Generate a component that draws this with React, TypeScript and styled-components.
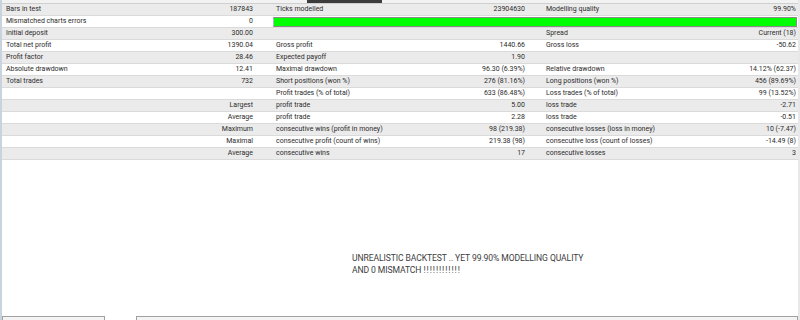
import styled, { createGlobalStyle } from "styled-components";

const GlobalStyle = createGlobalStyle`
  html, body {
    margin: 0;
    padding: 0;
    background: #ffffff;
  }
  body {
    font-family: Roboto, "Liberation Sans", sans-serif;
    color: #2b2b2b;
  }
`;

const Window = styled.div`
  width: 800px;
  height: 320px;
  box-sizing: border-box;
  display: flex;
  flex-direction: column;
  overflow: hidden;
  background: #ffffff;
  border-left: 2px solid #c9d3de;
  border-right: 2px solid #e8e8e8;
`;

const TopStrip = styled.div`
  height: 3px;
  flex-shrink: 0;
  background: #f2f2f2;
  border-bottom: 1px solid #cfcfcf;
  display: flex;
  padding-left: 305px;
`;

const ScrollThumb = styled.div`
  width: 75px;
  height: 3px;
  background: #3c3c3c;
`;

const Table = styled.div`
  display: flex;
  flex-direction: column;
  flex-shrink: 0;
`;

const Row = styled.div<{ $shade: boolean }>`
  display: grid;
  grid-template-columns: 148px 123px 167px 103px 157px 98px;
  height: 12px;
  box-sizing: border-box;
  border-bottom: 1px solid #dadada;
  background: ${(p) => (p.$shade ? "#ebebeb" : "#ffffff")};
  font-size: 7px;
  line-height: 11px;
`;

const Label = styled.div<{ $pad: number }>`
  padding-left: ${(p) => p.$pad}px;
  white-space: nowrap;
  overflow: hidden;
`;

const Value = styled.div<{ $pad: number }>`
  padding-right: ${(p) => p.$pad}px;
  text-align: right;
  white-space: nowrap;
  overflow: hidden;
`;

const QualityBar = styled.div`
  grid-column: 3 / 7;
  margin: 1px 1px 0 0;
  height: 10px;
  box-sizing: border-box;
  background: #00ff00;
  border: 1px solid #8a8a8a;
  border-left-color: #a9b8c8;
`;

const NoteArea = styled.div`
  flex: 1;
  padding: 92px 0 0 350px;
`;

const Note = styled.p`
  margin: 0;
  width: 260px;
  font-size: 8.6px;
  line-height: 12px;
  color: #404040;
  letter-spacing: -0.1px;
`;

const Bangs = styled.span`
  letter-spacing: 0.9px;
`;

const BottomBar = styled.div`
  height: 4px;
  flex-shrink: 0;
  display: flex;
  gap: 31px;
`;

const Field = styled.div<{ $w: number }>`
  width: ${(p) => p.$w}px;
  box-sizing: border-box;
  border-top: 1px solid #a0a0a0;
  border-left: 1px solid #a0a0a0;
  border-right: 1px solid #a0a0a0;
  background: #f4f4f4;
  flex: ${(p) => (p.$w ? "none" : "1")};
`;

type Cells = [string, string, string, string, string, string];

const rows: (Cells | "bar")[] = [
  ["Bars in test", "187843", "Ticks modelled", "23904630", "Modelling quality", "99.90%"],
  "bar",
  ["Initial deposit", "300.00", "", "", "Spread", "Current (18)"],
  ["Total net profit", "1390.04", "Gross profit", "1440.66", "Gross loss", "-50.62"],
  ["Profit factor", "28.46", "Expected payoff", "1.90", "", ""],
  ["Absolute drawdown", "12.41", "Maximal drawdown", "96.30 (6.39%)", "Relative drawdown", "14.12% (62.37)"],
  ["Total trades", "732", "Short positions (won %)", "276 (81.16%)", "Long positions (won %)", "456 (89.69%)"],
  ["", "", "Profit trades (% of total)", "633 (86.48%)", "Loss trades (% of total)", "99 (13.52%)"],
  ["", "Largest", "profit trade", "5.00", "loss trade", "-2.71"],
  ["", "Average", "profit trade", "2.28", "loss trade", "-0.51"],
  ["", "Maximum", "consecutive wins (profit in money)", "98 (219.38)", "consecutive losses (loss in money)", "10 (-7.47)"],
  ["", "Maximal", "consecutive profit (count of wins)", "219.38 (98)", "consecutive loss (count of losses)", "-14.49 (8)"],
  ["", "Average", "consecutive wins", "17", "consecutive losses", "3"],
];

function App() {
  return (
    <>
      <GlobalStyle />
      <Window>
        <TopStrip>
          <ScrollThumb />
        </TopStrip>
        <Table>
          {rows.map((r, i) =>
            r === "bar" ? (
              <Row key={i} $shade={i % 2 === 0}>
                <Label $pad={4}>Mismatched charts errors</Label>
                <Value $pad={20}>0</Value>
                <QualityBar />
              </Row>
            ) : (
              <Row key={i} $shade={i % 2 === 0}>
                <Label $pad={4}>{r[0]}</Label>
                <Value $pad={20}>{r[1]}</Value>
                <Label $pad={3}>{r[2]}</Label>
                <Value $pad={18}>{r[3]}</Value>
                <Label $pad={3}>{r[4]}</Label>
                <Value $pad={2}>{r[5]}</Value>
              </Row>
            )
          )}
        </Table>
        <NoteArea>
          <Note>
            UNREALISTIC BACKTEST .. YET 99.90% MODELLING QUALITY
            <br />
            AND 0 MISMATCH <Bangs>!!!!!!!!!!!!</Bangs>
          </Note>
        </NoteArea>
        <BottomBar>
          <Field $w={103} />
          <Field $w={0} />
        </BottomBar>
      </Window>
    </>
  );
}

export default App;
